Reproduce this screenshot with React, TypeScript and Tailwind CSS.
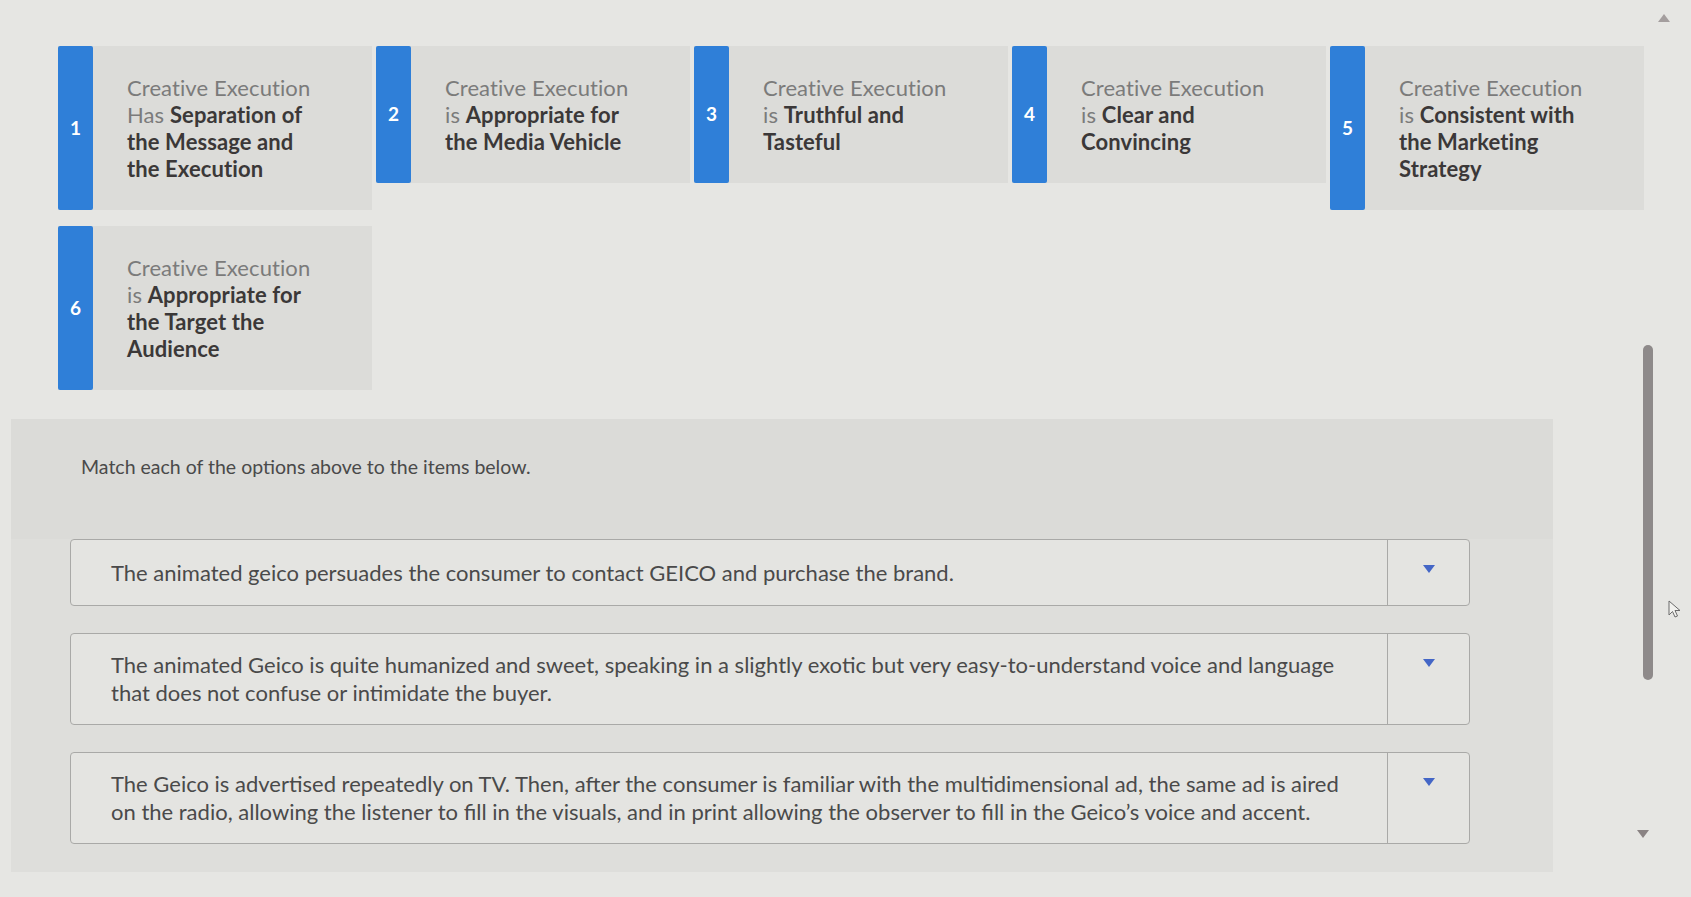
import React from "react";

type Seg = { t: string; b?: boolean };

const options: { n: number; lines: Seg[][] }[] = [
  {
    n: 1,
    lines: [
      [{ t: "Creative Execution" }],
      [{ t: "Has " }, { t: "Separation of", b: true }],
      [{ t: "the Message and", b: true }],
      [{ t: "the Execution", b: true }],
    ],
  },
  {
    n: 2,
    lines: [
      [{ t: "Creative Execution" }],
      [{ t: "is " }, { t: "Appropriate for", b: true }],
      [{ t: "the Media Vehicle", b: true }],
    ],
  },
  {
    n: 3,
    lines: [
      [{ t: "Creative Execution" }],
      [{ t: "is " }, { t: "Truthful and", b: true }],
      [{ t: "Tasteful", b: true }],
    ],
  },
  {
    n: 4,
    lines: [
      [{ t: "Creative Execution" }],
      [{ t: "is " }, { t: "Clear and", b: true }],
      [{ t: "Convincing", b: true }],
    ],
  },
  {
    n: 5,
    lines: [
      [{ t: "Creative Execution" }],
      [{ t: "is " }, { t: "Consistent with", b: true }],
      [{ t: "the Marketing", b: true }],
      [{ t: "Strategy", b: true }],
    ],
  },
  {
    n: 6,
    lines: [
      [{ t: "Creative Execution" }],
      [{ t: "is " }, { t: "Appropriate for", b: true }],
      [{ t: "the Target the", b: true }],
      [{ t: "Audience", b: true }],
    ],
  },
];

const items: string[][] = [
  ["The animated geico persuades the consumer to contact GEICO and purchase the brand."],
  [
    "The animated Geico is quite humanized and sweet, speaking in a slightly exotic but very easy-to-understand voice and language",
    "that does not confuse or intimidate the buyer.",
  ],
  [
    "The Geico is advertised repeatedly on TV. Then, after the consumer is familiar with the multidimensional ad, the same ad is aired",
    "on the radio, allowing the listener to fill in the visuals, and in print allowing the observer to fill in the Geico\u2019s voice and accent.",
  ],
];

function OptionCard({ n, lines }: { n: number; lines: Seg[][] }) {
  return (
    <div className="flex w-[314px] bg-[#dcdcd9]">
      <div className="flex w-[35px] shrink-0 items-center justify-center rounded-[2px] bg-[#2f7fd8] text-[19px] font-bold text-white">
        {n}
      </div>
      <div className="py-[28px] pl-[34px] pr-2 text-[22px] leading-[27px] tracking-[0.1px]">
        {lines.map((line, i) => (
          <div className="whitespace-nowrap" key={i}>
            {line.map((s, j) =>
              s.b ? (
                <span className="font-bold text-[#3b3838]" key={j}>
                  {s.t}
                </span>
              ) : (
                <span className="text-[#7b7b7b]" key={j}>
                  {s.t}
                </span>
              ),
            )}
          </div>
        ))}
      </div>
    </div>
  );
}

function MatchRow({ lines }: { lines: string[] }) {
  return (
    <div className="flex min-h-[67px] w-[1400px] rounded-[4px] border border-[#a9a9a7] bg-[#e4e4e1]">
      <div className="flex flex-1 items-center py-[17px] pl-[40px] pr-2 text-[22px] leading-[28px] text-[#4a4a4a]">
        <div>
          {lines.map((l, i) => (
            <div className="whitespace-nowrap" key={i}>
              {l}
            </div>
          ))}
        </div>
      </div>
      <div className="flex w-[82px] shrink-0 justify-center border-l border-[#a9a9a7] pt-[25px]">
        <svg width="12" height="8" viewBox="0 0 12 8">
          <path d="M0 0 L12 0 L6 8 Z" fill="#4466c6" />
        </svg>
      </div>
    </div>
  );
}

export default function App() {
  return (
    <div
      className="relative h-[897px] w-[1691px] overflow-hidden bg-[#e6e6e3]"
      style={{ fontFamily: "Lato, 'Open Sans', sans-serif" }}
    >
      <div className="flex w-[1660px] flex-wrap items-start gap-x-[4px] gap-y-[16px] pl-[58px] pt-[46px]">
        {options.map((o) => (
          <OptionCard key={o.n} lines={o.lines} n={o.n} />
        ))}
      </div>

      <div className="ml-[11px] mt-[29px] w-[1542px] bg-[#dededb] pb-[28px]">
        <div className="bg-[#dbdbd8] pb-[60px] pl-[70px] pt-[36px] text-[19.5px] leading-[24px] text-[#4a4a4a]">
          Match each of the options above to the items below.
        </div>
        <div className="flex flex-col gap-[27px] pl-[59px]">
          {items.map((l, i) => (
            <MatchRow key={i} lines={l} />
          ))}
        </div>
      </div>

      {/* scrollbar */}
      <svg className="absolute left-[1658px] top-[14px]" width="12" height="8" viewBox="0 0 12 8">
        <path d="M0 8 L12 8 L6 0 Z" fill="#a49e9e" />
      </svg>
      <div className="absolute left-[1643px] top-[345px] h-[335px] w-[10px] rounded-full bg-[#8e8a8a]" />
      <svg className="absolute left-[1637px] top-[830px]" width="12" height="8" viewBox="0 0 12 8">
        <path d="M0 0 L12 0 L6 8 Z" fill="#8a8383" />
      </svg>
      {/* cursor */}
      <svg className="absolute left-[1668px] top-[600px]" width="14" height="20" viewBox="0 0 14 20">
        <path
          d="M1 1 L1 15 L4.5 11.5 L7 17 L9.5 16 L7 10.5 L12 10.5 Z"
          fill="#f2f2ef"
          stroke="#6b6b6b"
          strokeWidth="1"
          strokeLinejoin="round"
        />
      </svg>
    </div>
  );
}
